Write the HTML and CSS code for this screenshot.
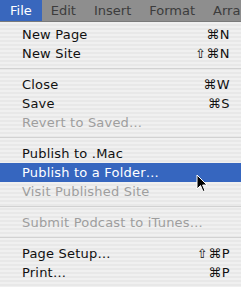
FILE: index.html
```html
<!DOCTYPE html>
<html lang="en">
<head>
    <meta charset="UTF-8">
    <title>File menu</title>
    <link rel="stylesheet" href="styles.css">
</head>
<body>
    <div class="menubar">
        <span class="title active">File</span>
        <span class="title">Edit</span>
        <span class="title">Insert</span>
        <span class="title">Format</span>
        <span class="title">Arrange</span>
    </div>
    <div class="menu">
        <div class="item"><span>New Page</span><span class="key">⌘N</span></div>
        <div class="item"><span>New Site</span><span class="key">⇧⌘N</span></div>
        <div class="sep"></div>
        <div class="item"><span>Close</span><span class="key">⌘W</span></div>
        <div class="item"><span>Save</span><span class="key">⌘S</span></div>
        <div class="item off"><span>Revert to Saved…</span></div>
        <div class="sep"></div>
        <div class="item"><span>Publish to .Mac</span></div>
        <div class="item hot"><span>Publish to a Folder…</span></div>
        <div class="item off"><span>Visit Published Site</span></div>
        <div class="sep"></div>
        <div class="item off"><span>Submit Podcast to iTunes…</span></div>
        <div class="sep"></div>
        <div class="item"><span>Page Setup…</span><span class="key">⇧⌘P</span></div>
        <div class="item"><span>Print…</span><span class="key">⌘P</span></div>
    </div>
    <svg class="cursor" width="12" height="19" viewBox="0 0 12 19">
        <path d="M1 1 L1 15 L4.5 11.5 L7 17.5 L9 16.6 L6.6 11 L11 11 Z" fill="#000" stroke="#fff" stroke-width="1"/>
    </svg>
</body>
</html>
```

FILE: styles.css
```css
body {
    margin: 0;
    width: 241px;
    height: 287px;
    overflow: hidden;
    font-family: "DejaVu Sans", "Lucida Grande", sans-serif;
    background: #f2f2f2;
    position: relative;
}
.menubar {
    display: flex;
    height: 21px;
    overflow: hidden;
    background: #8e8e8e;
    border-bottom: 1px solid #7a7a7a;
    font-size: 13px;
    white-space: nowrap;
}
.title {
    padding: 0 9px;
    line-height: 21px;
    color: #3c3c3c;
}
.title.active {
    padding: 0 10px;
    background: #3967bd;
    color: #fff;
}
.menu {
    padding-top: 3px;
    background: repeating-linear-gradient(to bottom, #f0f0f0 0, #f0f0f0 2px, #e8e8e8 2px, #e8e8e8 4px);
    height: 263px;
}
.item {
    display: flex;
    justify-content: space-between;
    height: 19px;
    line-height: 19px;
    padding: 0 11px 0 22px;
    font-size: 13px;
    letter-spacing: 0.2px;
    color: #111;
    white-space: nowrap;
}
.item.off {
    color: #9e9e9e;
}
.item.hot {
    background: #3666bf;
    color: #fff;
}
.key {
    letter-spacing: 0.5px;
}
.sep {
    height: 12px;
    background: linear-gradient(#d2d2d2, #d2d2d2) 0 5px / 100% 1px no-repeat;
}
.cursor {
    position: absolute;
    left: 196px;
    top: 174px;
}
```
